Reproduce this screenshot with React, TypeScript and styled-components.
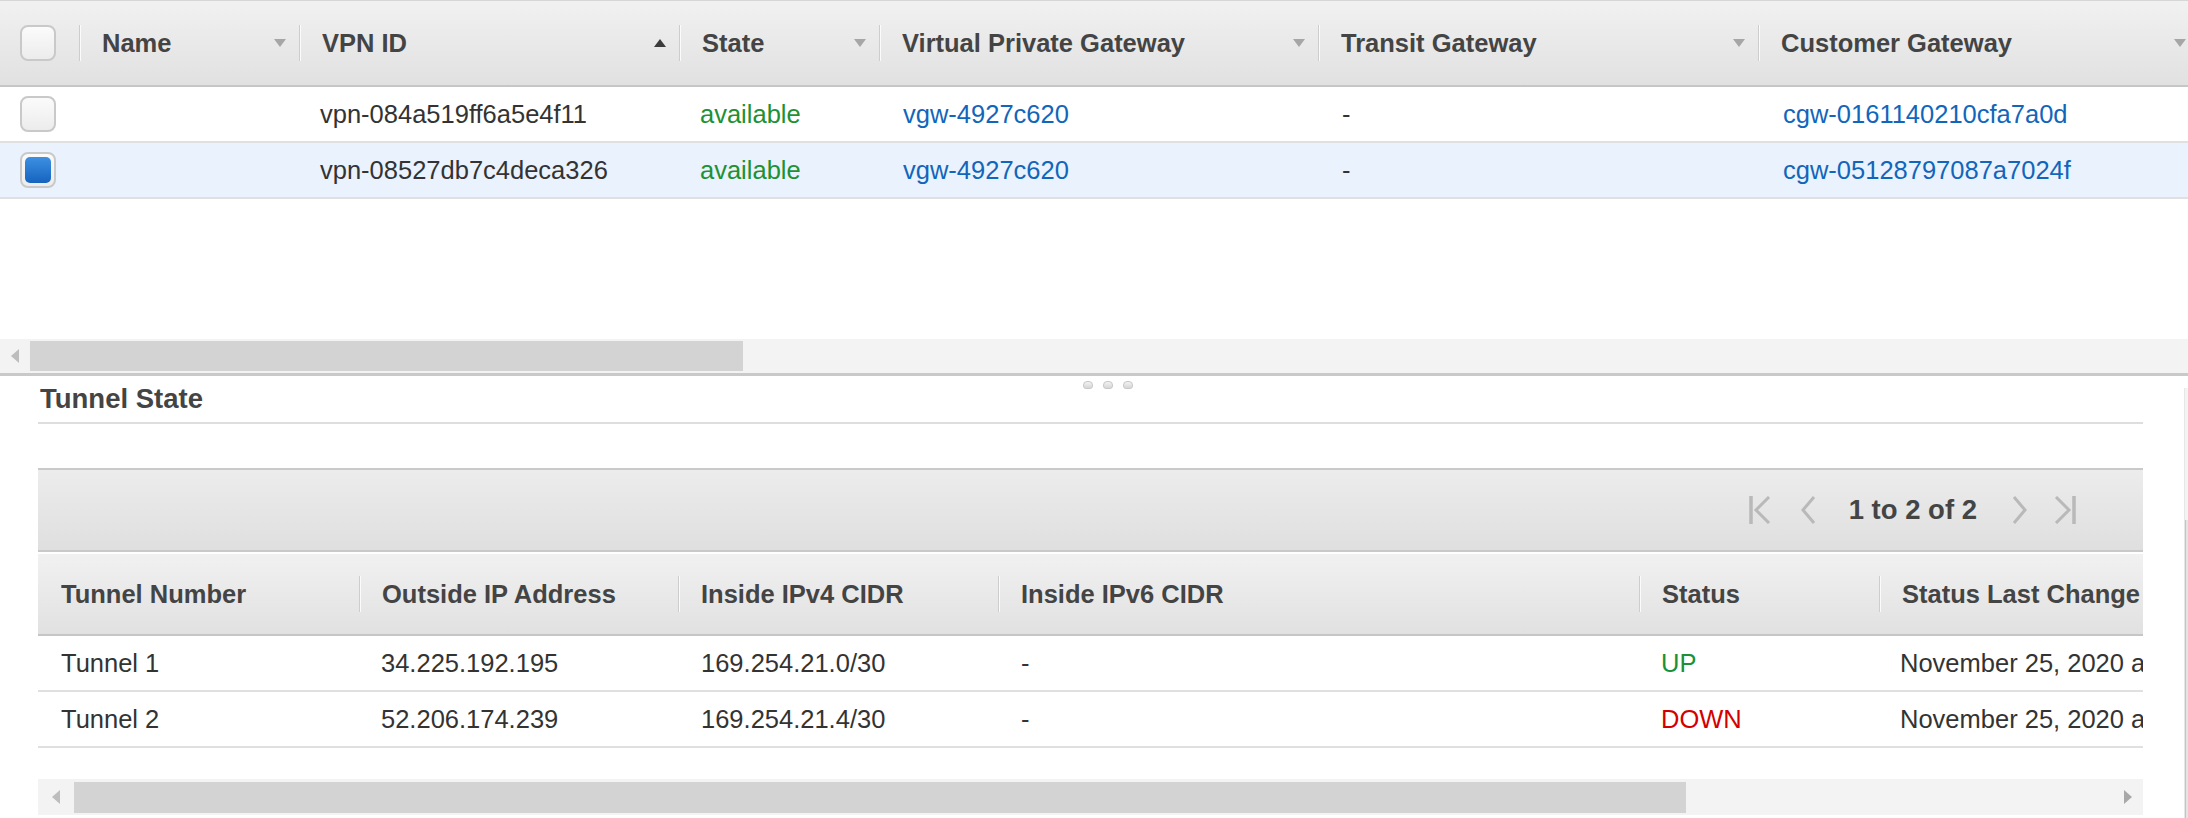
import * as React from 'react'
import styled, { createGlobalStyle } from 'styled-components'

interface VpnRow {
  id: string,
  state: string,
  vgw: string,
  tgw: string,
  cgw: string,
  selected: boolean
}

interface TunnelRow {
  name: string,
  outside: string,
  ipv4: string,
  ipv6: string,
  status: 'UP' | 'DOWN',
  changed: string
}

const vpnColumns = [
  { title: 'Name', sort: 'none' },
  { title: 'VPN ID', sort: 'asc' },
  { title: 'State', sort: 'none' },
  { title: 'Virtual Private Gateway', sort: 'none' },
  { title: 'Transit Gateway', sort: 'none' },
  { title: 'Customer Gateway', sort: 'none' }
]

const vpnRows: Array<VpnRow> = [
  { id: 'vpn-084a519ff6a5e4f11', state: 'available', vgw: 'vgw-4927c620', tgw: '-', cgw: 'cgw-0161140210cfa7a0d', selected: false },
  { id: 'vpn-08527db7c4deca326', state: 'available', vgw: 'vgw-4927c620', tgw: '-', cgw: 'cgw-05128797087a7024f', selected: true }
]

const tunnelColumns = ['Tunnel Number', 'Outside IP Address', 'Inside IPv4 CIDR', 'Inside IPv6 CIDR', 'Status', 'Status Last Change']

const tunnelRows: Array<TunnelRow> = [
  { name: 'Tunnel 1', outside: '34.225.192.195', ipv4: '169.254.21.0/30', ipv6: '-', status: 'UP', changed: 'November 25, 2020 at' },
  { name: 'Tunnel 2', outside: '52.206.174.239', ipv4: '169.254.21.4/30', ipv6: '-', status: 'DOWN', changed: 'November 25, 2020 at' }
]

const VPN_GRID = '79px 220px 380px 200px 439px 440px 441px'
const TUNNEL_GRID = '321px 319px 320px 641px 240px 400px'

const GlobalStyle = createGlobalStyle`
  html, body {
    margin: 0;
    padding: 0;
    background: #fff;
  }
  body {
    font-family: "Liberation Sans", Arial, Helvetica, sans-serif;
    color: #333;
  }
`

const Page = styled.div`
  width: 2188px;
  height: 818px;
  overflow: hidden;
  display: flex;
  flex-direction: column;
  background: #fff;
`

const TopPane = styled.div`
  height: 376px;
  box-sizing: border-box;
  border-top: 1px solid #d6d6d6;
  border-bottom: 3px solid #c9c9c9;
  display: flex;
  flex-direction: column;
`

const Viewport = styled.div`
  flex: 1;
  overflow: hidden;
`

const GridRow = styled.div<{ $cols: string, $height: number, $selected?: boolean, $head?: boolean }>`
  display: grid;
  grid-template-columns: ${p => p.$cols};
  width: max-content;
  height: ${p => p.$height}px;
  box-sizing: border-box;
  border-bottom: 2px solid ${p => p.$head ? '#c6c6c6' : '#e0e0e0'};
  background: ${p => p.$head
    ? 'linear-gradient(to bottom, #f1f1f1 0%, #e1e1e1 100%)'
    : p.$selected ? '#eaf2fd' : '#fff'};
`

const HeadCell = styled.div`
  display: flex;
  align-items: center;
  padding-right: 13px;
  min-width: 0;
  font-size: 25.5px;
  font-weight: bold;
  color: #444;
  white-space: nowrap;
  overflow: hidden;
`

const Sep = styled.span<{ $hidden?: boolean }>`
  flex-shrink: 0;
  width: 2px;
  height: 36px;
  margin-right: 21px;
  background: ${p => p.$hidden ? 'transparent' : 'linear-gradient(to right, #cdcdcd 50%, #fbfbfb 50%)'};
`

const Label = styled.span`
  flex: 1;
  overflow: hidden;
`

const Caret = styled.span<{ $up?: boolean }>`
  flex-shrink: 0;
  width: 0;
  height: 0;
  border-left: 6.5px solid transparent;
  border-right: 6.5px solid transparent;
  ${p => p.$up
    ? 'border-bottom: 8px solid #3c3c3c;'
    : 'border-top: 8px solid #a6a6a6;'}
`

const Cell = styled.div<{ $pad: number, $tone?: 'ok' | 'bad' | 'link' }>`
  display: flex;
  align-items: center;
  padding-left: ${p => p.$pad}px;
  font-size: 25.5px;
  white-space: nowrap;
  overflow: hidden;
  color: ${p => p.$tone === 'ok' ? '#1d9133'
    : p.$tone === 'bad' ? '#d40000'
    : p.$tone === 'link' ? '#1166bb' : '#333'};
`

const CheckCell = styled.div`
  display: flex;
  align-items: center;
  padding-left: 20px;
`

const Check = styled.span<{ $checked?: boolean }>`
  width: 36px;
  height: 36px;
  box-sizing: border-box;
  border: 2px solid #c9c9c9;
  border-radius: 8px;
  background: linear-gradient(to bottom, #fbfbfb, #ececec);
  display: flex;
  align-items: center;
  justify-content: center;

  &::after {
    content: '';
    display: ${p => p.$checked ? 'block' : 'none'};
    width: 26px;
    height: 26px;
    border-radius: 5px;
    background: linear-gradient(to bottom, #3d90e3, #1563be);
  }
`

const HScroll = styled.div<{ $height: number }>`
  height: ${p => p.$height}px;
  flex-shrink: 0;
  background: #f3f3f3;
  display: flex;
  align-items: flex-start;
`

const ArrowZone = styled.div<{ $width: number, $height: number }>`
  width: ${p => p.$width}px;
  height: ${p => p.$height}px;
  flex-shrink: 0;
  display: flex;
  align-items: center;
  justify-content: center;
`

const Tri = styled.span<{ $dir: 'left' | 'right' }>`
  width: 0;
  height: 0;
  border-top: 7.5px solid transparent;
  border-bottom: 7.5px solid transparent;
  ${p => p.$dir === 'left'
    ? 'border-right: 8px solid #bdbdbd;'
    : 'border-left: 8px solid #a8a8a8;'}
`

const Thumb = styled.div<{ $width: number, $top: number, $height: number }>`
  width: ${p => p.$width}px;
  height: ${p => p.$height}px;
  margin-top: ${p => p.$top}px;
  background: #d3d3d3;
  flex-shrink: 0;
`

const Spacer = styled.div`
  flex: 1;
`

const BottomPane = styled.div`
  flex: 1;
  display: flex;
  position: relative;
  min-height: 0;
`

const Grip = styled.div`
  position: absolute;
  top: 5px;
  left: 1083px;
  display: flex;
  gap: 10px;
`

const GripDot = styled.span`
  width: 10px;
  height: 8px;
  box-sizing: border-box;
  border-radius: 4px 4px 3px 3px;
  border: 1px solid #c8c8c8;
  background: linear-gradient(to bottom, #f2f2f2, #d6d6d6);
`

const Content = styled.div`
  flex: 1;
  min-width: 0;
  padding: 0 41px 0 38px;
  display: flex;
  flex-direction: column;
  overflow: hidden;
`

const Title = styled.h2`
  margin: 0;
  padding: 7px 0 7px 2px;
  font-size: 27.5px;
  line-height: 32px;
  font-weight: bold;
  color: #444;
  border-bottom: 2px solid #dedede;
`

const Pager = styled.div`
  margin-top: 44px;
  height: 84px;
  box-sizing: border-box;
  border-top: 2px solid #c9c9c9;
  border-bottom: 2px solid #c9c9c9;
  background: linear-gradient(to bottom, #ececec 0%, #dfdfdf 100%);
  display: flex;
  align-items: center;
  justify-content: flex-end;
  padding-right: 67px;
`

const PagerText = styled.span<{ $gap: number }>`
  margin-left: ${p => p.$gap}px;
  font-size: 27.5px;
  font-weight: bold;
  color: #444;
  white-space: nowrap;
`

const PagerIcon = styled.svg<{ $gap: number }>`
  margin-left: ${p => p.$gap}px;
  flex-shrink: 0;
  display: block;
`

const TunnelTable = styled.div`
  margin-top: 2px;
  overflow: hidden;
`

const VScroll = styled.div`
  width: 3px;
  margin-top: 12px;
  background: #f3f3f3;
  border-left: 1px solid #e6e6e6;
  display: flex;
  flex-direction: column;
`

const VThumb = styled.div`
  margin-top: 132px;
  flex: 1;
  border-left: 1px solid #c4c4c4;
  background: #e4e4e4;
`

const Chevron: React.FunctionComponent<{ dir: 'first' | 'prev' | 'next' | 'last', gap: number }> = ({ dir, gap }) => {
  const edge = dir === 'first' || dir === 'last'
  const w = edge ? 22 : 15
  let points = ''
  let bar: number | null = null
  if (dir === 'first') { points = '20,1 7,14 20,27'; bar = 2 }
  if (dir === 'prev') { points = '13,1 2,14 13,27' }
  if (dir === 'next') { points = '2,1 13,14 2,27' }
  if (dir === 'last') { points = '2,1 15,14 2,27'; bar = 20 }
  return (
    <PagerIcon $gap={gap} width={w} height={28} viewBox={`0 0 ${w} 28`}>
      {bar !== null && <line x1={bar} y1={0} x2={bar} y2={28} stroke="#b9b9b9" strokeWidth={3.5} />}
      <polyline points={points} fill="none" stroke="#b9b9b9" strokeWidth={3} />
    </PagerIcon>
  )
}

const App: React.FunctionComponent = () => {
  return (
    <>
      <GlobalStyle />
      <Page>
        <TopPane>
          <Viewport>
            <GridRow $cols={VPN_GRID} $height={86} $head>
              <CheckCell><Check /></CheckCell>
              {
                vpnColumns.map(column => (
                  <HeadCell key={`head-${column.title}`}>
                    <Sep />
                    <Label>{column.title}</Label>
                    <Caret $up={column.sort === 'asc'} />
                  </HeadCell>
                ))
              }
            </GridRow>
            {
              vpnRows.map(row => (
                <GridRow key={row.id} $cols={VPN_GRID} $height={56} $selected={row.selected}>
                  <CheckCell><Check $checked={row.selected} /></CheckCell>
                  <Cell $pad={22}></Cell>
                  <Cell $pad={21}>{row.id}</Cell>
                  <Cell $pad={21}$tone="ok">{row.state}</Cell>
                  <Cell $pad={24} $tone="link">{row.vgw}</Cell>
                  <Cell $pad={24}>{row.tgw}</Cell>
                  <Cell $pad={25} $tone="link">{row.cgw}</Cell>
                </GridRow>
              ))
            }
          </Viewport>
          <HScroll $height={34}>
            <ArrowZone $width={30} $height={34}><Tri $dir="left" /></ArrowZone>
            <Thumb $width={713} $top={2} $height={30} />
            <Spacer />
          </HScroll>
        </TopPane>

        <BottomPane>
          <Grip>
            <GripDot />
            <GripDot />
            <GripDot />
          </Grip>
          <Content>
            <Title>Tunnel State</Title>
            <Pager>
              <Chevron dir="first" gap={0} />
              <Chevron dir="prev" gap={30} />
              <PagerText $gap={33}>1 to 2 of 2</PagerText>
              <Chevron dir="next" gap={35} />
              <Chevron dir="last" gap={27} />
            </Pager>
            <TunnelTable>
              <GridRow $cols={TUNNEL_GRID} $height={82} $head>
                {
                  tunnelColumns.map((title, index) => (
                    <HeadCell key={`tunnel-head-${title}`}>
                      <Sep $hidden={index === 0} />
                      <Label>{title}</Label>
                    </HeadCell>
                  ))
                }
              </GridRow>
              {
                tunnelRows.map(row => (
                  <GridRow key={row.name} $cols={TUNNEL_GRID} $height={56}>
                    <Cell $pad={23}>{row.name}</Cell>
                    <Cell $pad={22}>{row.outside}</Cell>
                    <Cell $pad={23}>{row.ipv4}</Cell>
                    <Cell $pad={23}>{row.ipv6}</Cell>
                    <Cell $pad={22} $tone={row.status === 'UP' ? 'ok' : 'bad'}>{row.status}</Cell>
                    <Cell $pad={21}>{row.changed}</Cell>
                  </GridRow>
                ))
              }
            </TunnelTable>
            <HScroll $height={36} style={{ marginTop: 31 }}>
              <ArrowZone $width={36} $height={36}><Tri $dir="left" /></ArrowZone>
              <Thumb $width={1612} $top={3} $height={31} />
              <Spacer />
              <ArrowZone $width={30} $height={36}><Tri $dir="right" /></ArrowZone>
            </HScroll>
          </Content>
          <VScroll>
            <VThumb />
          </VScroll>
        </BottomPane>
      </Page>
    </>
  )
}

export default App
